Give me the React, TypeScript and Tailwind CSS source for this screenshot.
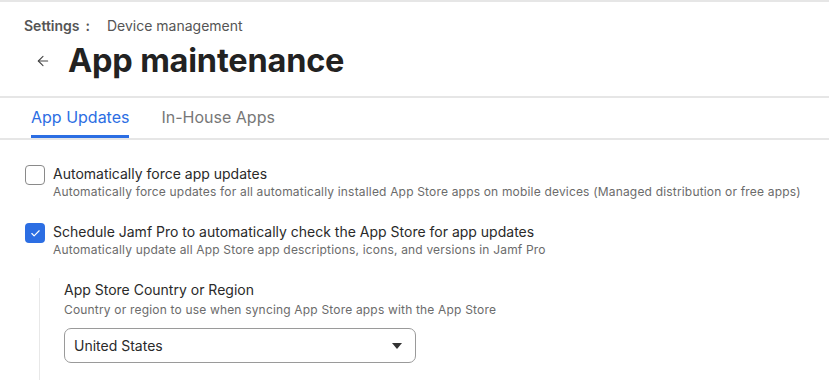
import { ArrowLeft, Check } from "lucide-react";

const FONT = "font-['Inter','Noto_Sans',sans-serif]";

function CheckRow({ checked, label, desc }: { checked: boolean; label: string; desc: string }) {
  return (
    <div className="flex items-start gap-[8px]">
      {checked ? (
        <span className="mt-[1px] flex h-[20px] w-[20px] shrink-0 items-center justify-center rounded-[4px] bg-[#2c6ee3]">
          <Check size={11} strokeWidth={2.5} className="text-white" />
        </span>
      ) : (
        <span className="mt-[1px] block h-[20px] w-[20px] shrink-0 rounded-[4px] border border-[#8a8a8a] bg-white" />
      )}
      <div>
        <div className="text-[14px] leading-[20px] text-[#2a2a2a]">{label}</div>
        <div className="text-[12px] leading-[16px] tracking-[0.18px] text-[#6b6b6b]">{desc}</div>
      </div>
    </div>
  );
}

export default function App() {
  return (
    <div className={`${FONT} h-[380px] w-[829px] overflow-hidden border-t-2 border-[#e6e6e6] bg-white`}>
      {/* header */}
      <div className="px-[24px] pt-[14px]">
        <div className="flex items-center text-[14px] leading-[20px]">
          <span className="font-semibold text-[#555]">Settings</span>
          <span className="ml-[6px] font-semibold text-[#555]">:</span>
          <span className="ml-[17px] text-[#555]">Device management</span>
        </div>
        <div className="mt-[5px] flex items-center">
          <ArrowLeft size={16} strokeWidth={1.6} className="ml-[11px] text-[#444]" />
          <h1 className="ml-[17px] text-[32.5px] font-bold leading-[40px] tracking-[-0.2px] text-[#222]">App maintenance</h1>
        </div>
      </div>

      {/* tabs */}
      <div className="mt-[15px] flex border-y-2 border-[#e6e6e6] px-[31px]">
        <div className="-mb-[2px] flex h-[40px] items-center border-b-[3px] border-[#2c6ee3] text-[16px] text-[#2c6ee3]">
          App Updates
        </div>
        <div className="ml-[32px] flex h-[40px] items-center pb-[3px] text-[16px] text-[#777]">In-House Apps</div>
      </div>

      {/* content */}
      <div className="px-[25px] pt-[24px]">
        <CheckRow
          checked={false}
          label="Automatically force app updates"
          desc="Automatically force updates for all automatically installed App Store apps on mobile devices (Managed distribution or free apps)"
        />
        <div className="mt-[22px]">
          <CheckRow
            checked
            label="Schedule Jamf Pro to automatically check the App Store for app updates"
            desc="Automatically update all App Store app descriptions, icons, and versions in Jamf Pro"
          />
        </div>
        <div className="ml-[14px] mt-[20px] border-l border-[#e8e8e8] pl-[24px] pt-[2px]">
          <div className="text-[14px] leading-[20px] text-[#2a2a2a]">App Store Country or Region</div>
          <div className="mt-[2px] text-[12px] leading-[16px] tracking-[0.18px] text-[#6b6b6b]">
            Country or region to use when syncing App Store apps with the App Store
          </div>
          <div className="mt-[10px] flex h-[35px] w-[352px] items-center justify-between rounded-[7px] border border-[#9a9a9a] pl-[9px] pr-[13px] text-[14px] text-[#2a2a2a]">
            <span>United States</span>
            <svg width="10" height="6" viewBox="0 0 10 6">
              <path d="M0 0h10L5 6z" fill="#333" />
            </svg>
          </div>
          <div className="h-[20px]" />
        </div>
      </div>
    </div>
  );
}
